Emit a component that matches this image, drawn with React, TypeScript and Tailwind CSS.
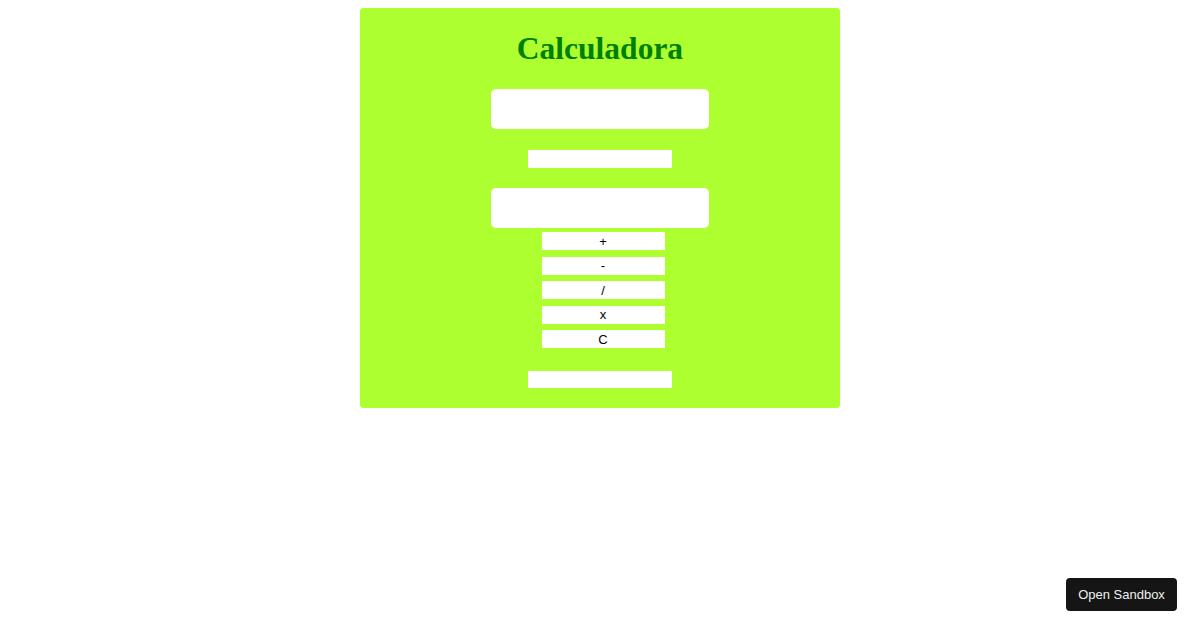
const ops = ["+", "-", "/", "x", "C"];

export default function App() {
  return (
    <div className="relative h-[630px] w-[1200px] bg-white">
      <div className="flex justify-center pt-[8px]">
        <div className="flex w-[480px] flex-col items-center rounded-[4px] bg-[#adff2f] pb-[20px] pt-[22px]">
          <h1 className="h-[37px] text-[31.5px] font-bold leading-[37px] text-[#008000] [font-family:'Liberation_Serif',serif]">
            Calculadora
          </h1>
          <div className="mt-[22px] h-[40px] w-[218px] rounded-[5px] bg-white" />
          <div className="mt-[21px] h-[18px] w-[144px] bg-white" />
          <div className="mt-[20px] h-[40px] w-[218px] rounded-[5px] bg-white" />
          <div className="ml-[6px] mt-[4px] flex flex-col gap-[6.5px]">
            {ops.map((op) => (
              <button
                key={op}
                type="button"
                className="flex h-[18px] w-[123px] items-center justify-center bg-white text-[13px] leading-none text-black [font-family:'Liberation_Sans',Arial,sans-serif]"
              >
                {op}
              </button>
            ))}
          </div>
          <div className="mt-[23px] h-[17px] w-[144px] bg-white" />
        </div>
      </div>
      <button
        type="button"
        className="absolute left-[1066px] top-[578px] flex h-[33px] w-[111px] items-center justify-center rounded-[4px] bg-[#151515] text-[13px] text-[#f0f0f0] [font-family:'Liberation_Sans',Arial,sans-serif]"
      >
        Open Sandbox
      </button>
    </div>
  );
}
